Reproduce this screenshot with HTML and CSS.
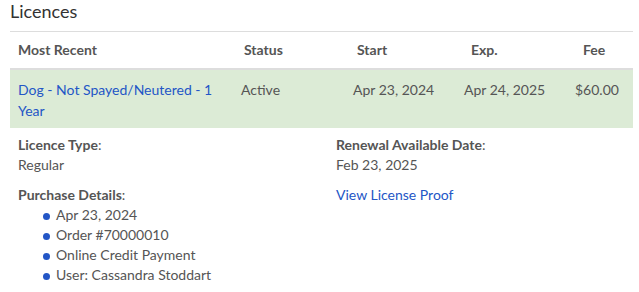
FILE: index.html
```html
<!DOCTYPE html>
<html>
<head>
<meta charset="utf-8">
<link rel="stylesheet" href="styles.css">
</head>
<body>
<div class="page">
  <h2 class="title">Licences</h2>
  <table class="lic-table">
    <thead>
      <tr>
        <th class="c1">Most Recent</th>
        <th class="c2">Status</th>
        <th class="c3">Start</th>
        <th class="c4">Exp.</th>
        <th class="c5">Fee</th>
      </tr>
    </thead>
    <tbody>
      <tr class="active-row">
        <td class="c1"><a class="link" href="#">Dog - Not Spayed/Neutered - 1 Year</a></td>
        <td class="c2">Active</td>
        <td class="c3">Apr 23, 2024</td>
        <td class="c4">Apr 24, 2025</td>
        <td class="c5">$60.00</td>
      </tr>
    </tbody>
  </table>
  <div class="details">
    <div class="col">
      <div class="field">
        <div class="label"><b>Licence Type</b>:</div>
        <div class="value">Regular</div>
      </div>
      <div class="field">
        <div class="label"><b>Purchase Details</b>:</div>
        <ul class="bullets">
          <li>Apr 23, 2024</li>
          <li>Order #70000010</li>
          <li>Online Credit Payment</li>
          <li>User: Cassandra Stoddart</li>
        </ul>
      </div>
    </div>
    <div class="col">
      <div class="field">
        <div class="label"><b>Renewal Available Date</b>:</div>
        <div class="value">Feb 23, 2025</div>
      </div>
      <div class="field">
        <a class="link" href="#">View License Proof</a>
      </div>
    </div>
  </div>
</div>
</body>
</html>
```
FILE: styles.css
```css
* { box-sizing: border-box; }
html, body { margin: 0; padding: 0; background: #fff; }
body {
  font-family: Lato, "Open Sans", "Liberation Sans", sans-serif;
  font-size: 14px;
  line-height: 20px;
  color: #555;
}
.page { padding: 0 6px 0 10px; }
.title {
  margin: 0;
  padding-top: 0;
  font-size: 18px;
  font-weight: 400;
  line-height: 22px;
  color: #333;
  height: 31px;
}
.lic-table {
  width: 623px;
  border-collapse: collapse;
  border-top: 1px solid #ddd;
  table-layout: fixed;
}
.lic-table th {
  font-weight: 700;
  text-align: left;
  padding: 8px;
  height: 37px;
  line-height: 20px;
  border-bottom: 2px solid #ddd;
  vertical-align: middle;
}
.lic-table td {
  padding: 9px 8px 7px 8px;
  line-height: 21px;
  vertical-align: top;
}
.active-row { background: #dcebd6; }
.c1 { width: 223px; }
.c2 { width: 112px; }
.c3 { width: 111px; }
.c4 { width: 111px; }
.c5 { width: 66px; }
.lic-table th.c2 { padding-left: 11px; }
.lic-table th.c3 { padding-left: 12px; }
.lic-table th.c4 { padding-left: 15px; }
.lic-table th.c5 { padding-left: 16px; }
.link { color: #2356c6; text-decoration: none; }
.details {
  display: flex;
  padding: 7px 8px 0 8px;
}
.col { width: 318px; }
.col + .col { flex: 1; }
.field { margin-bottom: 10px; }
.label b { font-weight: 700; }
.bullets {
  margin: 0;
  padding: 0 0 0 25px;
  list-style: none;
}
.bullets li { position: relative; padding-left: 13px; }
.bullets li::before {
  content: "";
  position: absolute;
  left: 0;
  top: 7.5px;
  width: 7px;
  height: 7px;
  border-radius: 50%;
  background: #2356c6;
}
```
